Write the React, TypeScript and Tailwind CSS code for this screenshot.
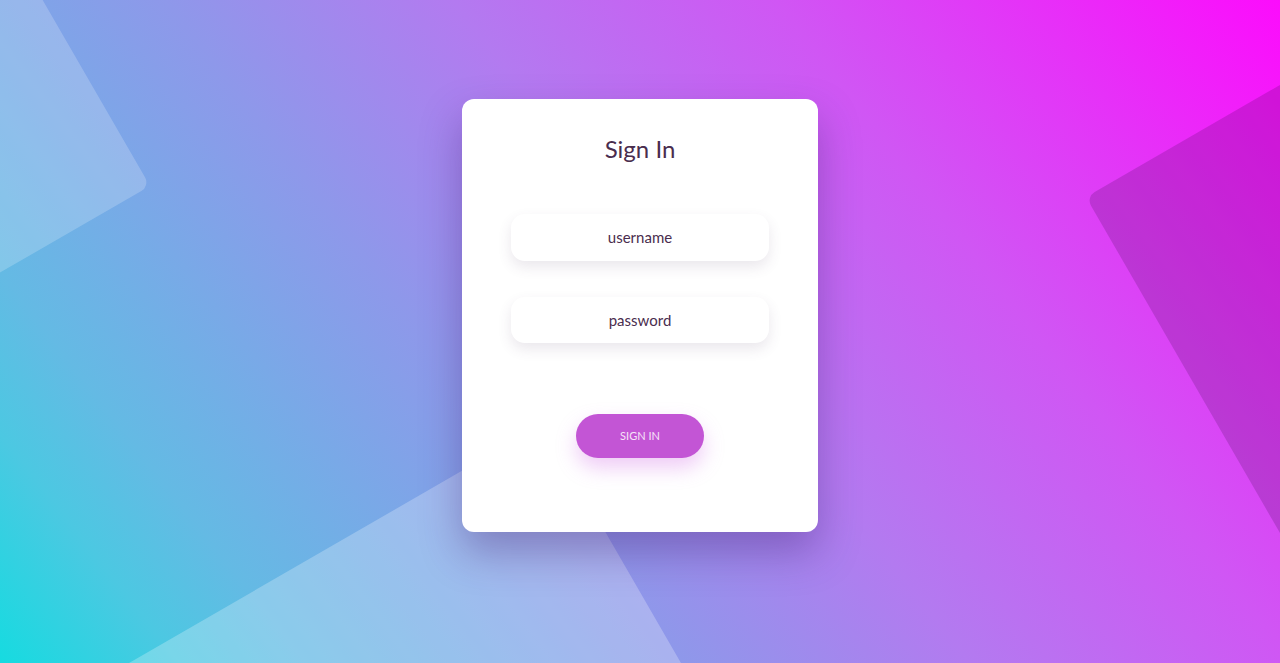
import React from "react";

export default function App() {
  return (
    <div className="relative w-full h-[663px] overflow-hidden bg-[linear-gradient(52deg,#16dbe0_0%,#4cc8e2_10%,#64bae4_17%,#8e98ea_38%,#b37af0_54%,#d056f4_72%,#fc0cfc_100%)] font-['Lato','Noto_Sans',sans-serif]">
      <svg className="absolute inset-0" width="1280" height="663" viewBox="0 0 1280 663">
        <g transform="translate(150,186) rotate(-30)">
          <rect x="-500" y="-500" width="500" height="500" rx="10" fill="#ffffff" fillOpacity="0.2" />
        </g>
        <g transform="translate(1086,197) rotate(-30)">
          <rect x="0" y="0" width="600" height="700" rx="10" fill="#200030" fillOpacity="0.17" />
        </g>
        <g transform="translate(543,424) rotate(-30)">
          <rect x="-900" y="0" width="900" height="700" rx="10" fill="#ffffff" fillOpacity="0.25" />
        </g>
      </svg>
      <div className="relative flex justify-center pt-[99px]">
        <div className="w-[356px] h-[433px] bg-white rounded-[12px] shadow-[0_20px_40px_rgba(60,30,110,0.35)] flex flex-col items-center pt-[34px]">
          <h1 className="text-[24px] leading-[32px] text-[#4a2d4e]">Sign In</h1>
          <div className="mt-[49px] w-[258px] h-[47px] rounded-[14px] bg-white shadow-[0_6px_14px_rgba(80,60,100,0.12)] flex items-center justify-center text-[15px] text-[#4a2d4e]">
            username
          </div>
          <div className="mt-[36px] w-[258px] h-[46px] rounded-[14px] bg-white shadow-[0_6px_14px_rgba(80,60,100,0.12)] flex items-center justify-center text-[15px] text-[#4a2d4e]">
            password
          </div>
          <button className="mt-[71px] w-[128px] h-[44px] rounded-full bg-[#c355d5] text-[11px] text-[#f6e3f8] shadow-[0_10px_20px_rgba(210,110,230,0.35)]">
            SIGN IN
          </button>
        </div>
      </div>
    </div>
  );
}
